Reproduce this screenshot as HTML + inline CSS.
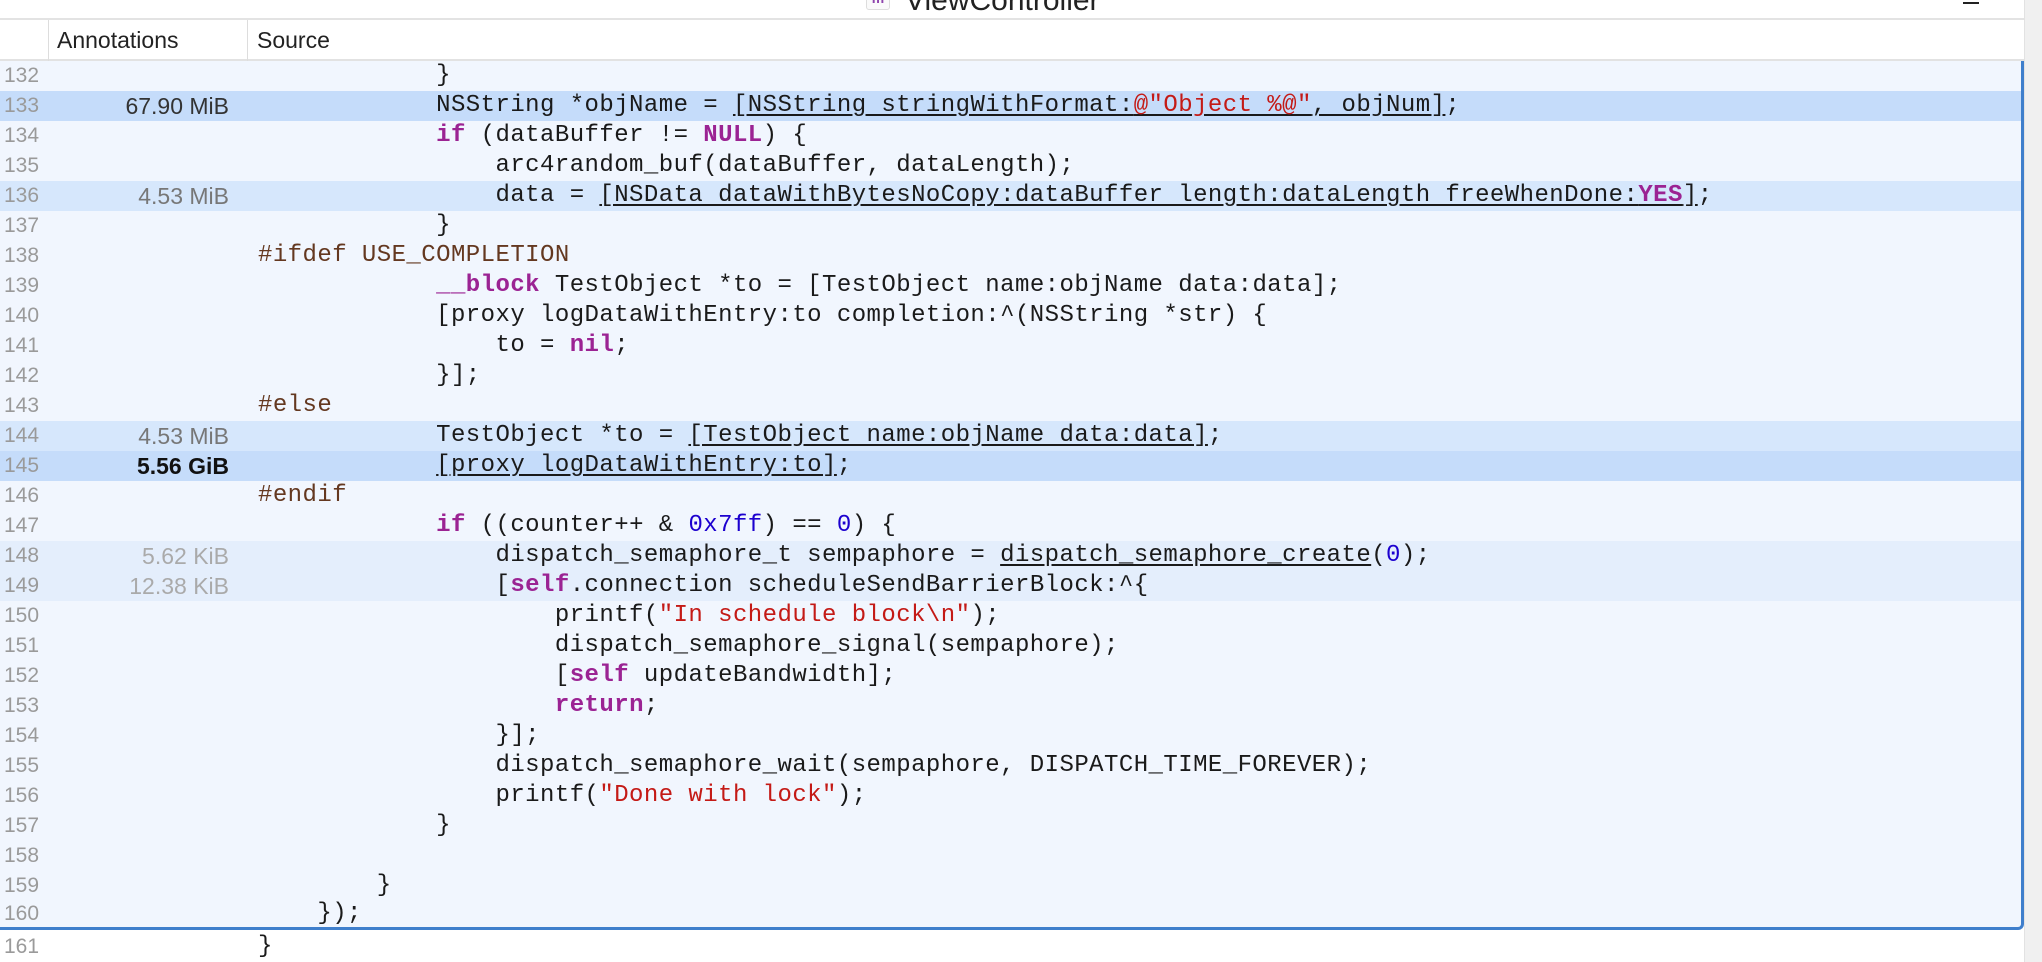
<!DOCTYPE html>
<html><head><meta charset="utf-8"><style>
*{margin:0;padding:0;box-sizing:border-box}
body{width:2042px;height:962px;overflow:hidden;background:#fff;position:relative;font-family:"Liberation Sans",sans-serif}
#title{position:absolute;left:0;top:0;width:2024px;height:20px;background:#fff;border-bottom:2px solid #e3e3e3;overflow:hidden}
#title .t{position:absolute;left:905px;top:-16px;font-size:30px;color:#222}
#title .ic{position:absolute;left:866px;top:-10px;width:24px;height:20px;border:1px solid #ddd;border-radius:3px;background:#fafafa;color:#8e44ad;font-size:14px;font-weight:bold;text-align:center;line-height:14px}
#title .dash{position:absolute;left:1963px;top:2px;width:16px;height:2px;background:#222}
#hdr{position:absolute;left:0;top:20px;width:2024px;height:41px;background:#fff;border-bottom:2px solid #e2e2e2;font-size:23px;color:#222}
#hdr .sep{position:absolute;top:0;width:1px;height:41px;background:#ddd}
#hdr span{position:absolute;top:7px}
#scroll{position:absolute;left:2024px;top:0;width:18px;height:962px;background:#f0f0f0;border-left:1px solid #e2e2e2}
#code{position:absolute;left:0;top:61px;width:2024px;height:869px;background:#f1f6fe;border-right:3px solid #3f7fcc;border-bottom:3px solid #3f7fcc;border-bottom-right-radius:6px}
.row{position:absolute;left:0;width:2021px;height:30px}
.ln{position:absolute;left:4px;top:3px;font-size:21px;color:#9a9a9a}
.an{position:absolute;right:1792px;top:2px;font-size:23px;text-align:right;white-space:nowrap}
.src{position:absolute;left:258px;top:1px;font-family:"Liberation Mono",monospace;font-size:24px;letter-spacing:0.44px;white-space:pre;color:#1a1a1a}
.k{color:#9b2393;font-weight:bold}
.s{color:#c41a16}
.n{color:#1c00cf}
.p{color:#643820}
u{text-decoration:underline;text-underline-offset:3px}
.h1{background:#c5dcfa}
.h2{background:#d6e7fc}
.h3{background:#e4eefc}
</style></head><body>
<div id="title"><div class="ic">m</div><div class="t">ViewController</div><div class="dash"></div></div>
<div id="hdr"><div class="sep" style="left:48px"></div><div class="sep" style="left:247px"></div><span style="left:57px">Annotations</span><span style="left:257px">Source</span></div>
<div id="scroll"></div>
<div id="code"></div>

<div class="row" style="top:61px"><span class="ln">132</span><span class="src">            }</span></div>
<div class="row h1" style="top:91px"><span class="ln">133</span><span class="an" style="color:#333">67.90 MiB</span><span class="src">            NSString *objName = <u>[NSString stringWithFormat:<span class="s">@"Object %@"</span>, objNum]</u>;</span></div>
<div class="row" style="top:121px"><span class="ln">134</span><span class="src">            <span class="k">if</span> (dataBuffer != <span class="k">NULL</span>) {</span></div>
<div class="row" style="top:151px"><span class="ln">135</span><span class="src">                arc4random_buf(dataBuffer, dataLength);</span></div>
<div class="row h2" style="top:181px"><span class="ln">136</span><span class="an" style="color:#777">4.53 MiB</span><span class="src">                data = <u>[NSData dataWithBytesNoCopy:dataBuffer length:dataLength freeWhenDone:<span class="k">YES</span>]</u>;</span></div>
<div class="row" style="top:211px"><span class="ln">137</span><span class="src">            }</span></div>
<div class="row" style="top:241px"><span class="ln">138</span><span class="src"><span class="p">#ifdef USE_COMPLETION</span></span></div>
<div class="row" style="top:271px"><span class="ln">139</span><span class="src">            <span class="k">__block</span> TestObject *to = [TestObject name:objName data:data];</span></div>
<div class="row" style="top:301px"><span class="ln">140</span><span class="src">            [proxy logDataWithEntry:to completion:^(NSString *str) {</span></div>
<div class="row" style="top:331px"><span class="ln">141</span><span class="src">                to = <span class="k">nil</span>;</span></div>
<div class="row" style="top:361px"><span class="ln">142</span><span class="src">            }];</span></div>
<div class="row" style="top:391px"><span class="ln">143</span><span class="src"><span class="p">#else</span></span></div>
<div class="row h2" style="top:421px"><span class="ln">144</span><span class="an" style="color:#777">4.53 MiB</span><span class="src">            TestObject *to = <u>[TestObject name:objName data:data]</u>;</span></div>
<div class="row h1" style="top:451px"><span class="ln">145</span><span class="an" style="color:#111;font-weight:bold">5.56 GiB</span><span class="src">            <u>[proxy logDataWithEntry:to]</u>;</span></div>
<div class="row" style="top:481px"><span class="ln">146</span><span class="src"><span class="p">#endif</span></span></div>
<div class="row" style="top:511px"><span class="ln">147</span><span class="src">            <span class="k">if</span> ((counter++ &amp; <span class="n">0x7ff</span>) == <span class="n">0</span>) {</span></div>
<div class="row h3" style="top:541px"><span class="ln">148</span><span class="an" style="color:#aaa">5.62 KiB</span><span class="src">                dispatch_semaphore_t sempaphore = <u>dispatch_semaphore_create</u>(<span class="n">0</span>);</span></div>
<div class="row h3" style="top:571px"><span class="ln">149</span><span class="an" style="color:#aaa">12.38 KiB</span><span class="src">                [<span class="k">self</span>.connection scheduleSendBarrierBlock:^{</span></div>
<div class="row" style="top:601px"><span class="ln">150</span><span class="src">                    printf(<span class="s">"In schedule block\n"</span>);</span></div>
<div class="row" style="top:631px"><span class="ln">151</span><span class="src">                    dispatch_semaphore_signal(sempaphore);</span></div>
<div class="row" style="top:661px"><span class="ln">152</span><span class="src">                    [<span class="k">self</span> updateBandwidth];</span></div>
<div class="row" style="top:691px"><span class="ln">153</span><span class="src">                    <span class="k">return</span>;</span></div>
<div class="row" style="top:721px"><span class="ln">154</span><span class="src">                }];</span></div>
<div class="row" style="top:751px"><span class="ln">155</span><span class="src">                dispatch_semaphore_wait(sempaphore, DISPATCH_TIME_FOREVER);</span></div>
<div class="row" style="top:781px"><span class="ln">156</span><span class="src">                printf(<span class="s">"Done with lock"</span>);</span></div>
<div class="row" style="top:811px"><span class="ln">157</span><span class="src">            }</span></div>
<div class="row" style="top:841px"><span class="ln">158</span><span class="src"></span></div>
<div class="row" style="top:871px"><span class="ln">159</span><span class="src">        }</span></div>
<div class="row" style="top:899px"><span class="ln">160</span><span class="src">    });</span></div>
<div class="row" style="top:932px"><span class="ln">161</span><span class="src">}</span></div>
</body></html>
